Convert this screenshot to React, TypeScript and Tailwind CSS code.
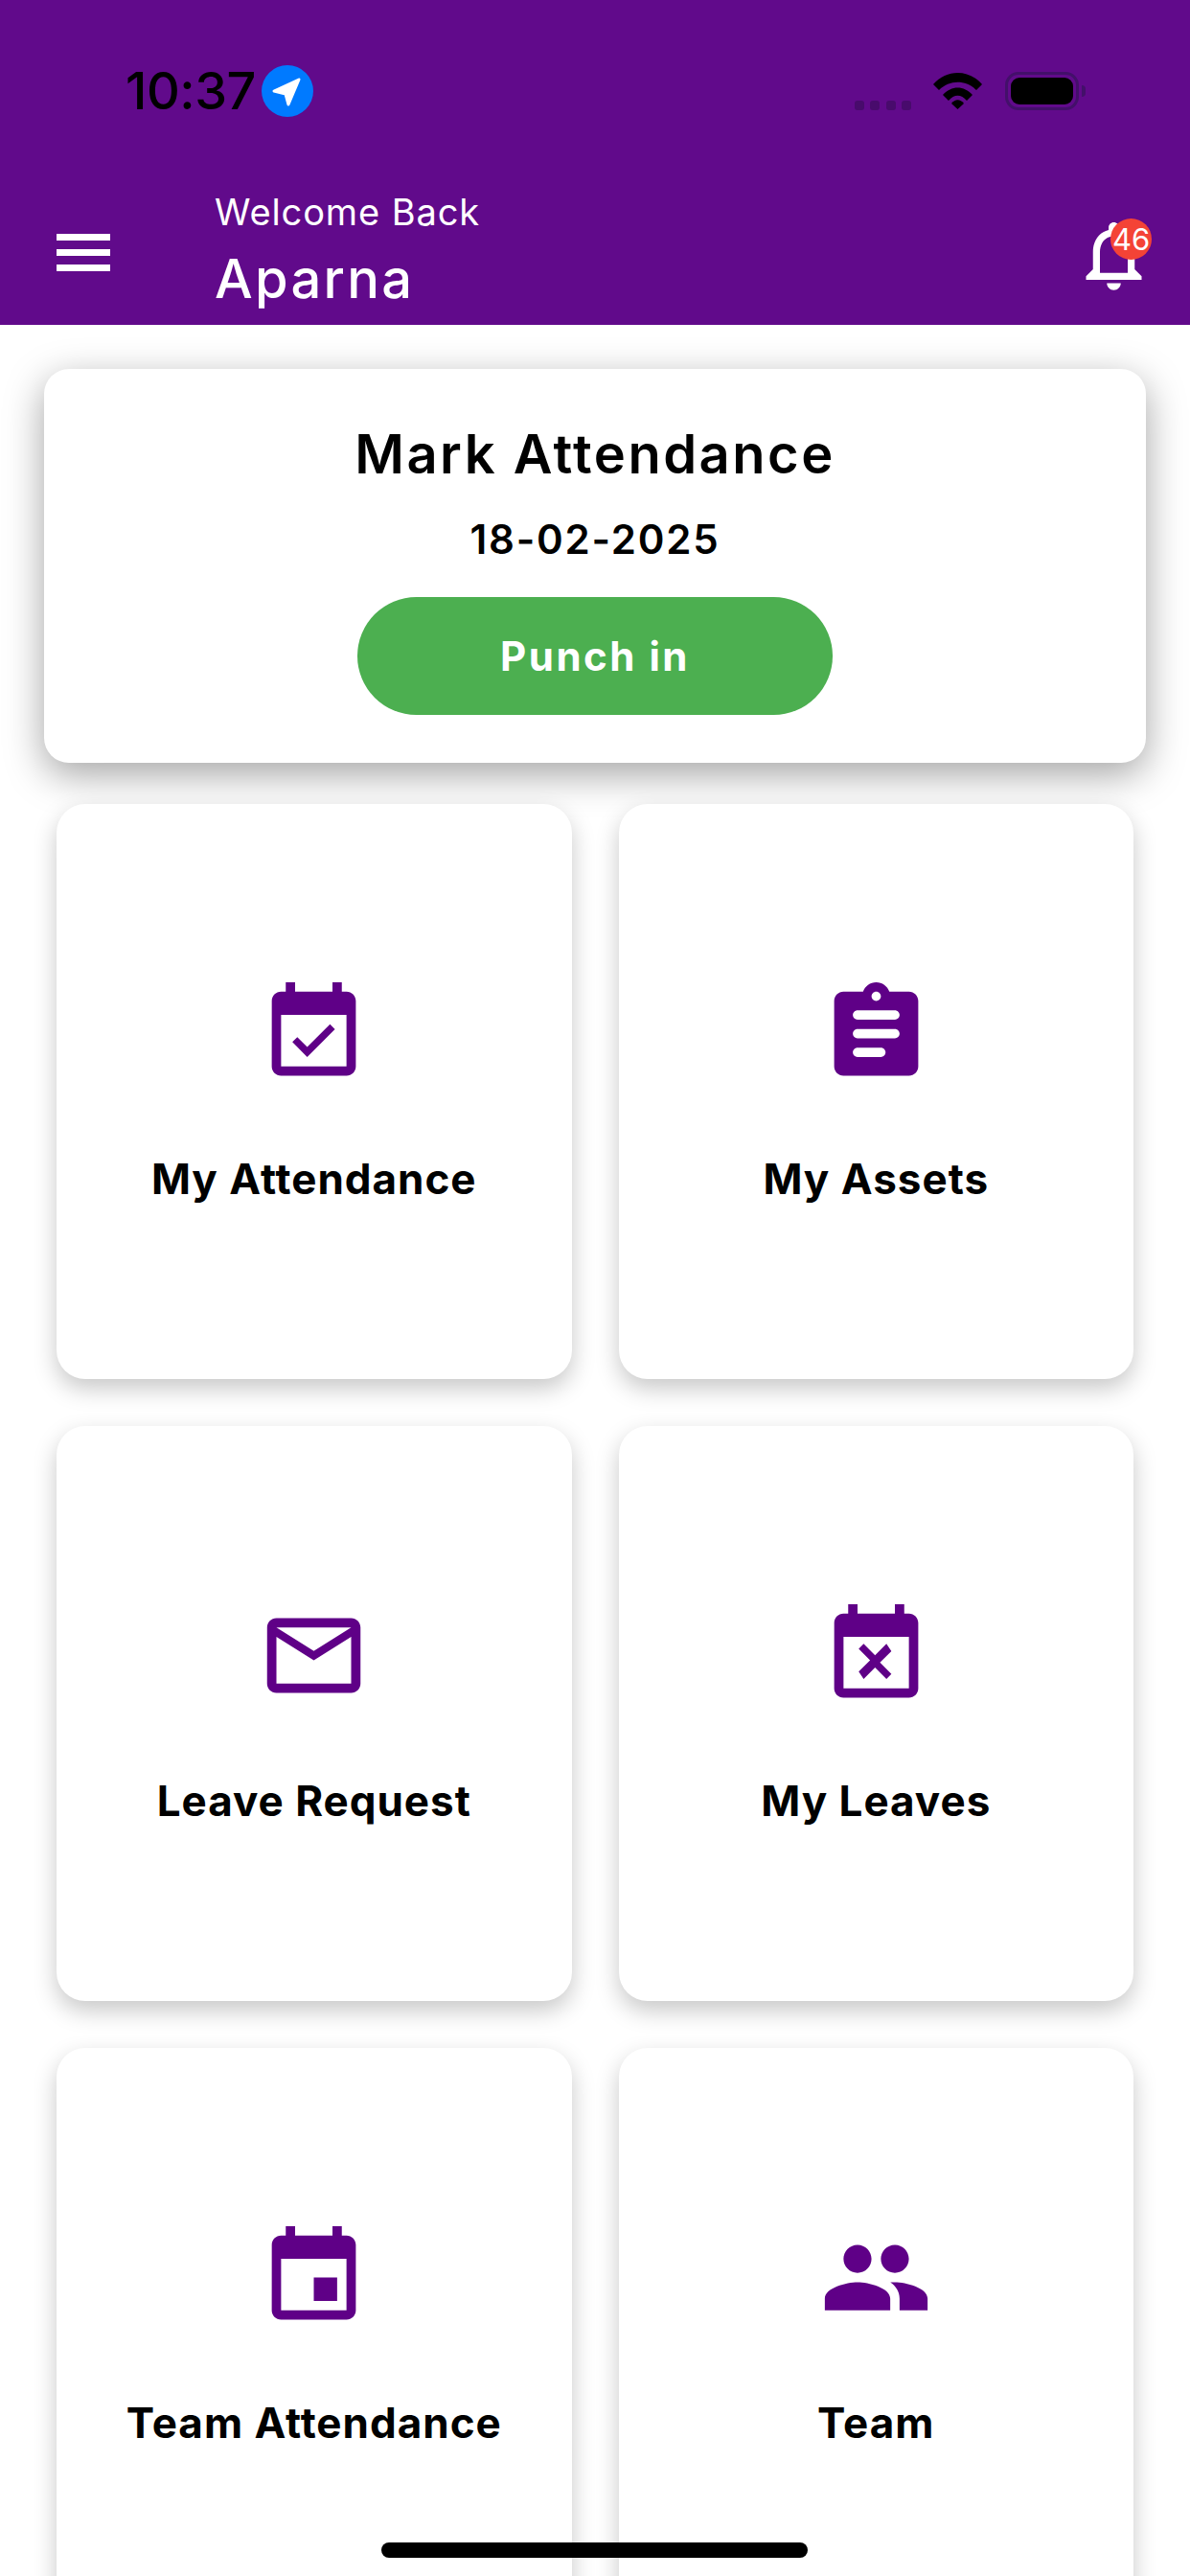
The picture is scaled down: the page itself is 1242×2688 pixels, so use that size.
import React from 'react'

const ICONS = {
  attendance:
    'M16.53 11.06L15.47 10l-4.88 4.88-2.12-2.12-1.06 1.06L10.59 17l5.94-5.94zM19 3h-1V1h-2v2H8V1H6v2H5c-1.11 0-1.99.9-1.99 2L3 19c0 1.1.89 2 2 2h14c1.1 0 2-.9 2-2V5c0-1.1-.9-2-2-2zm0 16H5V8h14v11z',
  assets:
    'M19 3h-4.18C14.4 1.84 13.3 1 12 1s-2.4.84-2.82 2H5c-1.1 0-2 .9-2 2v14c0 1.1.9 2 2 2h14c1.1 0 2-.9 2-2V5c0-1.1-.9-2-2-2zm-7 0c.55 0 1 .45 1 1s-.45 1-1 1-1-.45-1-1 .45-1 1-1zM8 7h8c.55 0 1 .45 1 1s-.45 1-1 1H8c-.55 0-1-.45-1-1s.45-1 1-1zm0 4h8c.55 0 1 .45 1 1s-.45 1-1 1H8c-.55 0-1-.45-1-1s.45-1 1-1zm0 4h5c.55 0 1 .45 1 1s-.45 1-1 1H8c-.55 0-1-.45-1-1s.45-1 1-1z',
  leave: 'M20 4H4c-1.1 0-1.99.9-1.99 2L2 18c0 1.1.9 2 2 2h16c1.1 0 2-.9 2-2V6c0-1.1-.9-2-2-2zm0 14H4V8l8 5 8-5v10zm-8-7L4 6h16l-8 5z',
  busy:
    'M9.31 17l2.44-2.44L14.19 17l1.06-1.06-2.44-2.44 2.44-2.44L14.19 9.5l-2.44 2.44L9.31 9.5l-1.06 1.06 2.44 2.44-2.44 2.44L9.31 17zM19 3h-1V1h-2v2H8V1H6v2H5c-1.11 0-1.99.9-1.99 2L3 19c0 1.1.89 2 2 2h14c1.1 0 2-.9 2-2V5c0-1.1-.9-2-2-2zm0 16H5V8h14v11z',
  event: 'M17 12h-5v5h5v-5zM16 1v2H8V1H6v2H5c-1.11 0-1.99.9-1.99 2L3 19c0 1.1.89 2 2 2h14c1.1 0 2-.9 2-2V5c0-1.1-.9-2-2-2h-1V1h-2zm3 18H5V8h14v11z',
  team: 'M16 11c1.66 0 2.99-1.34 2.99-3S17.66 5 16 5c-1.66 0-3 1.34-3 3s1.34 3 3 3zm-8 0c1.66 0 2.99-1.34 2.99-3S9.66 5 8 5C6.34 5 5 6.34 5 8s1.34 3 3 3zm0 2c-2.33 0-7 1.17-7 3.5V19h14v-2.5c0-2.33-4.67-3.5-7-3.5zm8 0c-.29 0-.62.02-.97.05 1.16.84 1.97 1.97 1.97 3.45V19h6v-2.5c0-2.33-4.67-3.5-7-3.5z',
}

const MENU = [
  { label: 'My Attendance', icon: ICONS.attendance },
  { label: 'My Assets', icon: ICONS.assets },
  { label: 'Leave Request', icon: ICONS.leave },
  { label: 'My Leaves', icon: ICONS.busy },
  { label: 'Team Attendance', icon: ICONS.event },
  { label: 'Team', icon: ICONS.team },
]

const StatusBar = () => (
  <div className="h-[54px] mt-[68px] shrink-0 flex items-center justify-between pl-[131px] pr-[109px]">
    <div className="flex items-center gap-[8px]">
      <span className="w-[134px] text-[54px] leading-none font-medium text-black tracking-[-0.5px]">10:37</span>
      <span className="w-[54px] h-[54px] rounded-full bg-[#007AFF] flex items-center justify-center">
        <svg width="54" height="54" viewBox="0 0 54 54">
          <path d="M39 15L13 27l12 3 3 11z" fill="#fff" stroke="#fff" strokeWidth="3" strokeLinejoin="round" />
        </svg>
      </span>
    </div>
    <div className="flex items-center">
      <div className="flex gap-[6.5px] mt-[30px] mr-[23px]">
        <span className="w-[10px] h-[10px] rounded-[3px] bg-[#480B6C]" />
        <span className="w-[10px] h-[10px] rounded-[3px] bg-[#480B6C]" />
        <span className="w-[10px] h-[10px] rounded-[3px] bg-[#480B6C]" />
        <span className="w-[10px] h-[10px] rounded-[3px] bg-[#480B6C]" />
      </div>
      <svg width="51" height="38" viewBox="0 0 51 38" className="mr-[24px]">
        <path d="M0 12C14-4 37-4 51 12l-6 6C34 7 17 7 6 18z" fill="#000" />
        <path d="M10 23C19 13 32 13 41 23l-6 6C29 22 22 22 16 29z" fill="#000" />
        <path d="M19 32c4-5 9-5 13 0l-6.500 6z" fill="#000" />
      </svg>
      <div className="w-[77px] h-[40px] rounded-[14px] border-[3px] border-[#43106A] p-[3px]">
        <div className="w-full h-full rounded-[9px] bg-black" />
      </div>
      <span className="w-[4px] h-[12px] ml-[3px] rounded-r-full bg-[#43106A]" />
    </div>
  </div>
)

const Header = () => (
  <header className="h-[339px] bg-[#610A8B] flex flex-col">
    <StatusBar />
    <div className="flex items-start pl-[59px] pr-[36px] mt-[73px]">
      <div className="w-[56px] flex flex-col gap-[9px] mt-[49px]">
        <span className="h-[7px] bg-white" />
        <span className="h-[7px] bg-white" />
        <span className="h-[7px] bg-white" />
      </div>
      <div className="ml-[109px] flex-1 text-white mt-[3px]">
        <p className="text-[38px] leading-[46px] tracking-[0.9px]">Welcome Back</p>
        <p className="text-[56px] leading-[68px] font-medium tracking-[2.300px] mt-[13px]">Aparna</p>
      </div>
      <div className="relative w-[87px] h-[87px] mt-[28px]">
        <svg width="87" height="87" viewBox="0 0 24 24" fill="#fff">
          <path d="M12 22c1.100 0 2-.9 2-2h-4c0 1.100.89 2 2 2zm6-6v-5c0-3.070-1.640-5.640-4.500-6.320V4c0-.83-.67-1.500-1.500-1.500s-1.500.67-1.500 1.500v.68C7.630 5.360 6 7.920 6 11v5l-2 2v1h16v-1l-2-2zm-2 1H8v-6c0-2.480 1.510-4.500 4-4.500s4 2.020 4 4.500v6z" />
        </svg>
        <span className="absolute left-[40px] top-[5px] w-[43px] h-[43px] rounded-full bg-[#F44336] flex items-center justify-center text-[31px] leading-none text-white">
          46
        </span>
      </div>
    </div>
  </header>
)

const AttendanceCard = () => (
  <section className="mx-[46px] mt-[46px] h-[411px] rounded-[26px] bg-white shadow-[0_12px_40px_rgba(0,0,0,0.36)] flex flex-col items-center">
    <h1 className="mt-[55px] text-[56px] leading-[68px] font-semibold text-black tracking-[2.500px]">Mark Attendance</h1>
    <p className="mt-[29px] text-[42px] leading-[52px] font-semibold text-black tracking-[1.800px]">18-02-2025</p>
    <button className="mt-[34px] w-[496px] h-[123px] rounded-full bg-[#4CAF50] text-white text-[42px] font-bold tracking-[2.500px]">
      Punch in
    </button>
  </section>
)

const MenuCard = ({ label, icon }: { label: string; icon: string }) => (
  <div className="h-[600px] rounded-[30px] bg-white shadow-[0_10px_24px_rgba(0,0,0,0.22)] flex flex-col items-center justify-center">
    <svg width="117" height="117" viewBox="0 0 24 24" fill="#5F0087" fillRule="evenodd">
      <path d={icon} />
    </svg>
    <p className="mt-[62px] -mb-[4px] text-[44px] leading-[63px] font-bold text-black tracking-[1px]">{label}</p>
  </div>
)

export default function App() {
  return (
    <div className="relative w-[1242px] h-[2688px] overflow-hidden bg-white font-['Inter','Liberation_Sans',sans-serif]">
      <Header />
      <AttendanceCard />
      <div className="grid grid-cols-2 gap-x-[49px] gap-y-[49px] px-[59px] mt-[43px]">
        {MENU.map(item => (
          <MenuCard key={item.label} label={item.label} icon={item.icon} />
        ))}
      </div>
      {/* home indicator */}
      <div className="absolute left-[398px] bottom-[19px] w-[445px] h-[16px] rounded-full bg-black" />
    </div>
  )
}
